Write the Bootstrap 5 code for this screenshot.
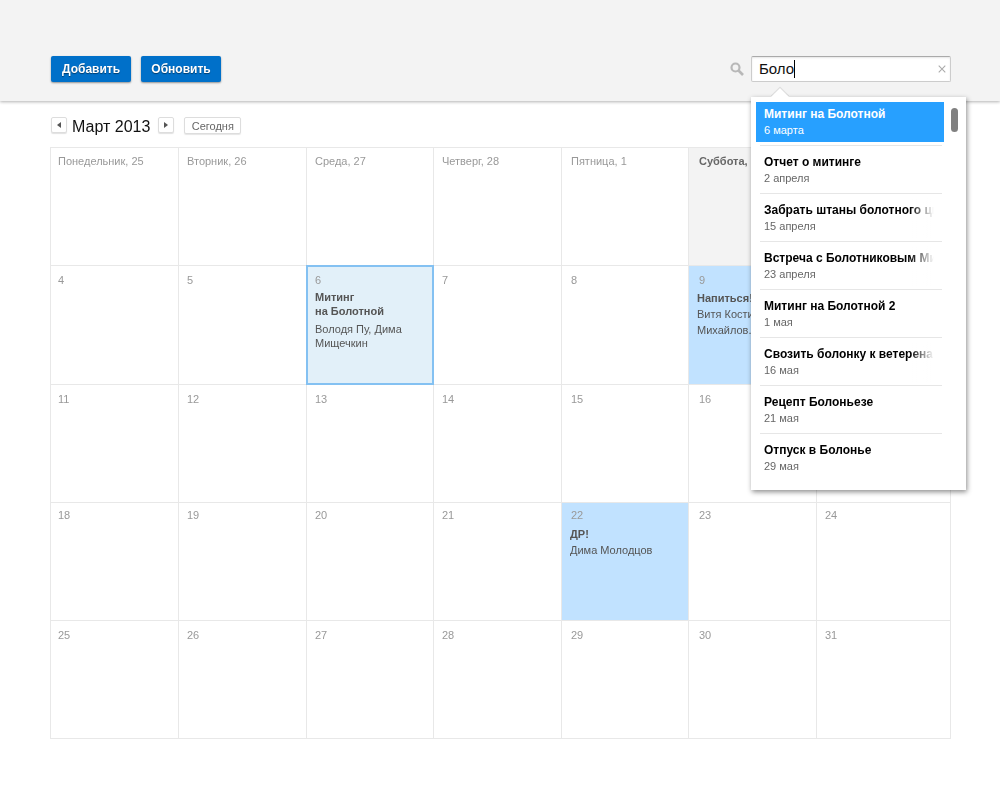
<!DOCTYPE html>
<html lang="ru">
<head>
<meta charset="utf-8">
<title>Календарь</title>
<link href="https://cdn.jsdelivr.net/npm/bootstrap@5.3.0/dist/css/bootstrap.min.css" rel="stylesheet">
<style>
html,body{height:100%}
body{font-family:"Liberation Sans",Arial,sans-serif;background:#fff;color:#222;overflow:hidden}
.topbar,.popup,.calbar,.cal{will-change:opacity}
.topbar{height:101px;background:#f3f3f3;box-shadow:0 1px 3px rgba(0,0,0,.3);padding:56px 49px 0 51px;position:relative;z-index:1}
.btn-pair{gap:10px}
.act-btn{height:26px;width:80px;padding:0;border:0;border-radius:2px;background:#0070c9;color:#fff;font-size:12px;font-weight:700;line-height:26px;text-shadow:0 1px 1px rgba(0,0,0,.45);box-shadow:0 1px 2px rgba(0,0,0,.4)}
.search-ico{margin-right:7px}
.search-wrap{width:200px;height:26px;background:#fff;border:1px solid #ccc;border-top-color:#aaa;border-radius:2px;padding-left:7px;font-size:15px;line-height:24px;color:#111;box-shadow:inset 0 1px 2px rgba(0,0,0,.1)}
.caret-line{display:inline-block;width:1px;height:18px;background:#000;vertical-align:-4px}
.clear-x{line-height:0}
.popup{position:absolute;left:751px;top:97px;width:215px;height:393px;background:#fff;box-shadow:1px 2px 5px rgba(0,0,0,.45);padding:5px 0 0 5px;z-index:2}
.popup-arrow{position:absolute;left:21px;top:-8px;width:16px;height:16px;background:#fff;transform:rotate(45deg) scale(.8);box-shadow:-1px -1px 1px rgba(0,0,0,.12)}
.thumb{position:absolute;left:200px;top:11px;width:7px;height:24px;border-radius:4px;background:#808080}
.res{position:relative;width:188px;height:40px;margin-bottom:8px;padding:5px 8px 0;white-space:nowrap;overflow:hidden;color:#000}
.res-t{font-size:12px;line-height:14px;font-weight:700}
.res-d{font-size:11px;line-height:14px;margin-top:2px;color:#666}
.res.on{background:#27a0ff;color:#fff}
.res.on .res-d{color:#fff}
.sep{width:182px;height:1px;background:#e6e6e6;margin:-5px 0 4px 4px}
.res-fade::after{content:"";position:absolute;right:0;top:0;bottom:0;width:34px;background:linear-gradient(90deg,rgba(255,255,255,0),#fff 70%)}
.calbar{padding:16px 0 0 51px;height:46px}
.nav-sq{width:16px;height:16px;padding:0;border:1px solid #ddd;border-radius:2px;background:#fff;box-shadow:0 1px 1px rgba(0,0,0,.12);line-height:0;display:flex;align-items:center;justify-content:center}
.month{font-size:16px;line-height:18px;color:#111;margin:1px 8px 0 5px;font-weight:400}
.today{height:17px;width:57px;padding:0;border:1px solid #ddd;border-radius:2px;background:#fff;font-size:11px;line-height:14px;color:#666;box-shadow:0 1px 1px rgba(0,0,0,.1);margin-left:10px}
.cal{display:grid;grid-template-columns:128px 128px 127px 128px 127px 128px 134px;grid-template-rows:118px 119px 118px 118px 118px;margin-left:50px;width:901px;border-top:1px solid #e8e8e8;border-left:1px solid #e8e8e8}
.day{border-right:1px solid #e8e8e8;border-bottom:1px solid #e8e8e8;padding:7px 8px;font-size:11px;line-height:14px;color:#999;overflow:hidden}
.day:nth-child(7n+1){padding-left:7px}
.day:nth-child(7n+5){padding-left:9px}
.day:nth-child(7n+6){padding-left:10px}
.day:nth-child(n+22):nth-child(-n+28){padding-top:5px}
.day:nth-child(-n+7){padding-top:6px}
.day.we-h{background:#f3f3f3;color:#666;font-weight:700;padding-left:10px}
.day.evt{background:#c1e2ff;color:#555;padding-left:8px}
.day.sel{background:#e2f0f9;border:2px solid #84c1f2;margin:-1px 0 0 -1px;padding:6px 7px;color:#555}
.num{color:#999;margin-bottom:3px;font-size:11px}
.evt-t{font-weight:700;color:#555;margin-bottom:4px}
.evt .num{margin-bottom:4px;padding-left:1px}
.evt .num.nudge{padding-left:2px}
.evt:nth-child(n+22) .num{margin-bottom:5px}
.evt .evt-t{margin-bottom:1px}
.evt-who{line-height:16px}
</style>
</head>
<body>
<div class="topbar d-flex align-items-start justify-content-between">
  <div class="d-flex btn-pair">
    <button class="act-btn" type="button">Добавить</button>
    <button class="act-btn" type="button">Обновить</button>
  </div>
  <div class="d-flex align-items-center">
    <svg class="search-ico" width="14" height="14" viewBox="0 0 14 14" fill="none" stroke="#b8b8b8"><circle cx="5.5" cy="5.5" r="4" stroke-width="2.2"/><path d="M8.5 8.5 13 13" stroke-width="2.6"/></svg>
    <div class="search-wrap d-flex align-items-center justify-content-between">
      <span>Боло<span class="caret-line"></span></span>
      <span class="clear-x me-1"><svg width="8" height="8" viewBox="0 0 9 9" stroke="#aaa" stroke-width="1.2"><path d="M.8.8l7.4 7.4M8.2.8.8 8.2"/></svg></span>
    </div>
  </div>
</div>

<div class="popup">
  <div class="popup-arrow"></div>
  <div class="thumb"></div>
  <div class="res on"><div class="res-t">Митинг на Болотной</div><div class="res-d">6 марта</div></div><div class="sep"></div>
  <div class="res"><div class="res-t">Отчет о митинге</div><div class="res-d">2 апреля</div></div><div class="sep"></div>
  <div class="res res-fade"><div class="res-t">Забрать штаны болотного цвета</div><div class="res-d">15 апреля</div></div><div class="sep"></div>
  <div class="res res-fade"><div class="res-t">Встреча с Болотниковым Михаилом</div><div class="res-d">23 апреля</div></div><div class="sep"></div>
  <div class="res"><div class="res-t">Митинг на Болотной 2</div><div class="res-d">1 мая</div></div><div class="sep"></div>
  <div class="res res-fade"><div class="res-t">Свозить болонку к ветеренару</div><div class="res-d">16 мая</div></div><div class="sep"></div>
  <div class="res"><div class="res-t">Рецепт Болоньезе</div><div class="res-d">21 мая</div></div><div class="sep"></div>
  <div class="res"><div class="res-t">Отпуск в Болонье</div><div class="res-d">29 мая</div></div>
</div>

<div class="calbar d-flex align-items-start">
  <button class="nav-sq" type="button" aria-label="Назад"><svg width="4" height="6" viewBox="0 0 4 6"><path d="M4 0v6L0 3z" fill="#555"/></svg></button>
  <h1 class="month">Март 2013</h1>
  <button class="nav-sq" type="button" aria-label="Вперёд"><svg width="4" height="6" viewBox="0 0 4 6"><path d="M0 0v6l4-3z" fill="#555"/></svg></button>
  <button class="today" type="button">Сегодня</button>
</div>

<div class="cal">
  <div class="day">Понедельник, 25</div><div class="day">Вторник, 26</div><div class="day">Среда, 27</div><div class="day">Четверг, 28</div><div class="day">Пятница, 1</div><div class="day we-h">Суббота, 2</div><div class="day we-h">Воскресенье, 3</div>
  <div class="day">4</div><div class="day">5</div>
  <div class="day sel"><div class="num">6</div><div class="evt-t">Митинг<br>на Болотной</div><div>Володя Пу, Дима Мищечкин</div></div>
  <div class="day">7</div><div class="day">8</div>
  <div class="day evt"><div class="num nudge">9</div><div class="evt-t">Напиться!</div><div class="evt-who">Витя Костин, Миша Михайлов.</div></div>
  <div class="day">10</div>
  <div class="day">11</div><div class="day">12</div><div class="day">13</div><div class="day">14</div><div class="day">15</div><div class="day">16</div><div class="day">17</div>
  <div class="day">18</div><div class="day">19</div><div class="day">20</div><div class="day">21</div>
  <div class="day evt"><div class="num">22</div><div class="evt-t">ДР!</div><div class="evt-who">Дима Молодцов</div></div>
  <div class="day">23</div><div class="day">24</div>
  <div class="day">25</div><div class="day">26</div><div class="day">27</div><div class="day">28</div><div class="day">29</div><div class="day">30</div><div class="day">31</div>
</div>
<script src="https://cdn.jsdelivr.net/npm/bootstrap@5.3.0/dist/js/bootstrap.bundle.min.js"></script>
</body>
</html>
